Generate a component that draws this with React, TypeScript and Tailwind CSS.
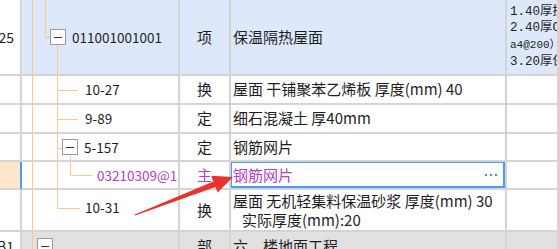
import React from 'react';

const cell =
  'relative flex items-center overflow-hidden whitespace-nowrap border-r-2 border-b-2 border-[#d4d4d4]';

const mono = { fontFamily: '"Liberation Mono", "Noto Sans CJK SC", monospace' };

function Toggle({ className }: { className: string }) {
  return (
    <span
      className={`flex h-4 w-4 shrink-0 items-center justify-center border border-[#9a9a9a] bg-white ${className}`}
    >
      <span className="h-px w-2 bg-[#333]" />
    </span>
  );
}

export default function App(): JSX.Element {
  return (
    <div
      className="relative h-[249px] w-[559px] overflow-hidden bg-white text-[#1e1e1e]"
      style={{ fontFamily: '"Noto Sans CJK SC", "Liberation Sans", sans-serif' }}
    >
      <div className="grid grid-cols-[22px_158px_51px_276px_1fr] grid-rows-[76px_29px_29px_28px_28px_42px_30px] text-[14px]">
        {/* row 0 */}
        <div className={`${cell} justify-end pr-[6px]`}>25</div>
        <div className={`${cell} bg-[#dde8fb]`}>
          <Toggle className="ml-[28px]" />
          <span className="ml-[6px] text-[13.5px]">011001001001</span>
        </div>
        <div className={`${cell} justify-center bg-[#dde8fb] text-[15px]`}>项</div>
        <div className={`${cell} bg-[#dde8fb] pl-[2px] text-[15px]`}>保温隔热屋面</div>
        <div className={`${cell} flex-col !items-start justify-center bg-[#dde8fb] pl-[3px] text-[12.5px] leading-[16.7px]`}>
          <span style={mono}>1.40厚挤塑聚苯板</span>
          <span style={mono}>2.40厚C20细石混凝土</span>
          <span className="text-[11px]" style={mono}>a4@200）双向</span>
          <span style={mono}>3.20厚保温砂浆</span>
        </div>

        {/* row 1 */}
        <div className={cell} />
        <div className={cell}>
          <span className="ml-[63px] text-[13.5px]">10-27</span>
        </div>
        <div className={`${cell} justify-center text-[15px]`}>换</div>
        <div className={`${cell} pl-[2px] text-[15px]`}>屋面 干铺聚苯乙烯板 厚度(mm) 40</div>
        <div className={cell} />

        {/* row 2 */}
        <div className={cell} />
        <div className={cell}>
          <span className="ml-[63px] text-[13.5px]">9-89</span>
        </div>
        <div className={`${cell} justify-center text-[15px]`}>定</div>
        <div className={`${cell} pl-[2px] text-[15px]`}>细石混凝土 厚40mm</div>
        <div className={cell} />

        {/* row 3 */}
        <div className={cell} />
        <div className={cell}>
          <Toggle className="ml-[40px]" />
          <span className="ml-[6px] text-[13.5px]">5-157</span>
        </div>
        <div className={`${cell} justify-center text-[15px]`}>定</div>
        <div className={`${cell} pl-[2px] text-[15px]`}>钢筋网片</div>
        <div className={cell} />

        {/* row 4 - selected */}
        <div className={`${cell} border-r-[#4a9af5] bg-[#fde6c9]`} />
        <div className={cell}>
          <span className="ml-[75px] text-[13.5px] text-[#b341c6]">03210309@1</span>
        </div>
        <div className={`${cell} justify-center text-[15px] text-[#b341c6]`}>主</div>
        <div className={`${cell} pl-[2px] text-[15px] text-[#b341c6]`}>
          钢筋网片
          <span className="ml-auto mr-[8px] flex gap-[3px]">
            <span className="h-[2px] w-[2px] bg-[#4a8ee0]" />
            <span className="h-[2px] w-[2px] bg-[#4a8ee0]" />
            <span className="h-[2px] w-[2px] bg-[#4a8ee0]" />
          </span>
          <div className="absolute -left-[1px] -top-[1px] bottom-0 right-0 border-2 border-[#4a9af5]" />
        </div>
        <div className={cell} />

        {/* row 5 */}
        <div className={cell} />
        <div className={cell}>
          <span className="mb-[5px] ml-[63px] text-[13.5px]">10-31</span>
        </div>
        <div className={`${cell} justify-center text-[15px]`}>换</div>
        <div className={`${cell} flex-col !items-start justify-center pl-[2px] text-[15px] leading-[19px]`}>
          <span>屋面 无机轻集料保温砂浆 厚度(mm) 30</span>
          <span className="pl-[9px]">实际厚度(mm):20</span>
        </div>
        <div className={cell} />

        {/* row 6 */}
        <div className={`${cell} justify-end pr-[6px]`}>B1</div>
        <div className={`${cell} bg-[#e1e1e1]`}>
          <Toggle className="ml-[15px]" />
        </div>
        <div className={`${cell} justify-center bg-[#e1e1e1] text-[15px]`}>部</div>
        <div className={`${cell} bg-[#e1e1e1] pl-[2px] text-[15px]`}>六、楼地面工程</div>
        <div className={`${cell} bg-[#e1e1e1]`} />
      </div>

      {/* tree guide lines */}
      <svg className="pointer-events-none absolute left-0 top-0" width="559" height="249" viewBox="0 0 559 249">
        <g stroke="#ffc98e" strokeWidth="1" fill="none">
          <path d="M32.5 0V249" />
          <path d="M45.5 0V37.5H50" />
          <path d="M57.5 45V208.5H80" />
          <path d="M57.5 90.5H78" />
          <path d="M57.5 119.5H78" />
          <path d="M57.5 148.5H62" />
          <path d="M70.5 156V175.5H92" />
        </g>
      </svg>

      {/* red arrow */}
      <svg className="pointer-events-none absolute left-0 top-0" width="559" height="249" viewBox="0 0 559 249">
        <polygon
          fill="#e8342e"
          points="134.8,214.4 213.3,181.4 211.2,175.8 233,177 217.6,192.6 215.5,187 135.2,215.6"
        />
      </svg>
    </div>
  );
}
